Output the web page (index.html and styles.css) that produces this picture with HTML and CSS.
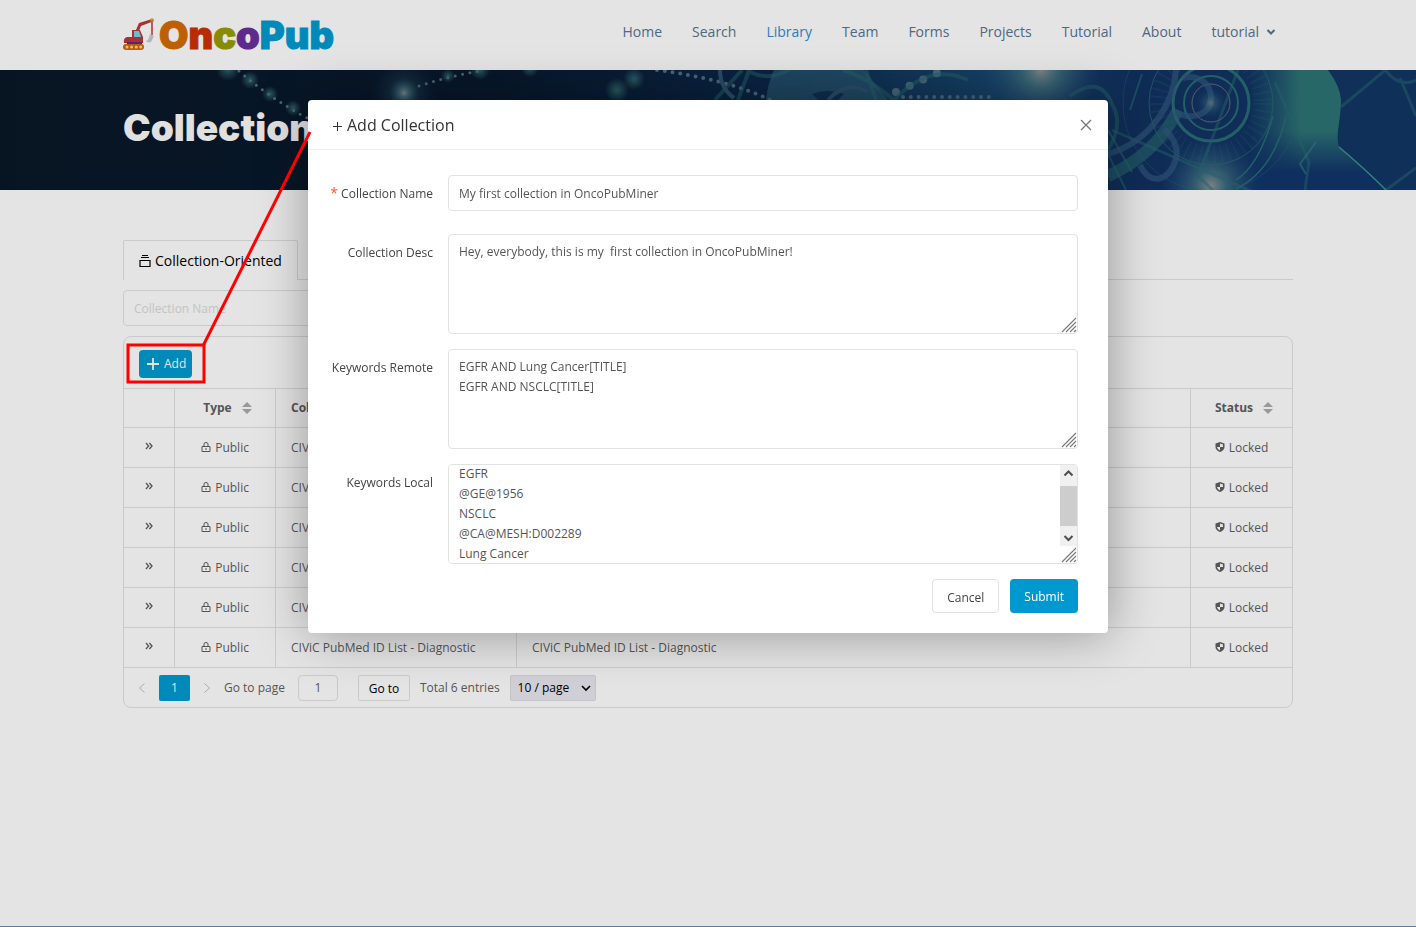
FILE: index.html
```
<!DOCTYPE html>
<html lang="en">
<head>
<meta charset="utf-8">
<meta name="viewport" content="width=device-width, initial-scale=1">
<title>OncoPub - Collections</title>
<link rel="stylesheet" href="styles.css">
</head>
<body>
<svg class="sprite" aria-hidden="true">
  <symbol id="i-lock" viewBox="0 0 10 12"><path d="M1 5.500h8v5H1zM3 5.500V3q0-1.500 2-1.500T7 3v2.500M4 8h2" fill="none" stroke="currentColor" stroke-width="1"/></symbol>
  <symbol id="i-shield" viewBox="0 0 10 12"><path d="M5 1 9.500 2.500V6c0 2.500-2 4-4.500 5C2.500 10 .5 8.500.5 6V2.500z" fill="currentColor"/><path d="M5 2.500 8 3.500V6H5zM5 6v3.500C3.300 8.700 2.200 7.600 2 6z" fill="#e4e4e4"/></symbol>
  <symbol id="i-more" viewBox="0 0 8 8"><path d="M1 1l2.600 3L1 7M4.400 1L7 4 4.400 7" fill="none" stroke="currentColor" stroke-width="1.300"/></symbol>
  <symbol id="i-sort" viewBox="0 0 10 12"><path d="M5 0l5 5H0zM5 12l5-5H0z" fill="#999"/></symbol>
  <symbol id="i-grip" viewBox="0 0 16 16"><path d="M1 15 15 1M5 15 15 5M9 15l6-6M13 15l2-2" fill="none" stroke="#777" stroke-width="1.100"/></symbol>
</svg>

<header class="site-header">
  <div class="container header-row">
    <a class="logo" href="#">
      <svg class="digger" viewBox="0 0 32 32" aria-hidden="true">
        <path d="M13 12 16 5l13-4 2 2-13 5-3 7z" fill="#a93230"/>
        <path d="M29 3v14" stroke="#a93230" stroke-width="1.500"/>
        <circle cx="29" cy="2" r="1.800" fill="#c08a2a"/>
        <path d="M27 16l4 2-3 6c-2 1-4 0-5-1 3-1 3-4 4-7z" fill="#b4b7b9"/>
        <path d="M9 12h8l3 7v6H1q-1-5 3-6h5z" fill="#a93230"/>
        <path d="M11 13h5l2 6h-7z" fill="#6bbbd2"/>
        <path d="M4 24h15v3H4z" fill="#57237b"/>
        <rect y="26" width="21" height="6" rx="3" fill="#b75b16"/>
        <path d="M4 29h14" stroke="#e9c64a" stroke-width="3" stroke-linecap="round" stroke-dasharray="0 4.600"/>
      </svg>
      <span class="logo-text"><span class="c-o">O</span><span class="c-n">n</span><span class="c-c">c</span><span class="c-p">o</span><span class="c-b">Pub</span></span>
    </a>
    <nav class="nav">
      <a href="#">Home</a><a href="#">Search</a><a href="#" class="active">Library</a><a href="#">Team</a><a href="#">Forms</a><a href="#">Projects</a><a href="#">Tutorial</a><a href="#">About</a>
      <a href="#" class="account">tutorial <svg width="10" height="8" viewBox="0 0 10 8" aria-hidden="true"><path d="M1.500 2 5 5.500 8.500 2" fill="none" stroke="currentColor" stroke-width="2"/></svg></a>
    </nav>
  </div>
</header>

<section class="hero">
  <svg class="hero-art" viewBox="0 0 1416 120" preserveAspectRatio="xMaxYMid slice" aria-hidden="true">
    <defs>
      <radialGradient id="glow"><stop offset="0" stop-color="#7c8385"/><stop offset=".3" stop-color="#45737a" stop-opacity=".7"/><stop offset="1" stop-color="#1c4577" stop-opacity="0"/></radialGradient>
      <radialGradient id="spot"><stop offset="0" stop-color="#2d6064" stop-opacity=".9"/><stop offset="1" stop-color="#2d6064" stop-opacity="0"/></radialGradient>
      <linearGradient id="head" gradientUnits="userSpaceOnUse" x1="1250" y1="0" x2="1341" y2="0"><stop offset="0" stop-color="#245c6c" stop-opacity="0"/><stop offset=".55" stop-color="#286768"/><stop offset="1" stop-color="#286768"/></linearGradient>
      <linearGradient id="deep" gradientUnits="userSpaceOnUse" x1="0" y1="0" x2="0" y2="120"><stop offset=".5" stop-color="#0f2f5e" stop-opacity="0"/><stop offset=".85" stop-color="#0f2f5e"/></linearGradient>
      <linearGradient id="sea"><stop offset="0" stop-color="#071523"/><stop offset=".35" stop-color="#071729"/><stop offset=".55" stop-color="#0a2342"/><stop offset=".7" stop-color="#153f63"/><stop offset=".8" stop-color="#0f2c56"/><stop offset="1" stop-color="#0f3159"/></linearGradient>
    </defs>
    <rect width="1416" height="120" fill="url(#sea)"/>
    <path d="M766 30Q768 12 774 0h90l24 30z" fill="#245068" opacity=".75"/>
    <path d="M812 24q15-6 32 0l-6 6h-20z" fill="#0f2c4e"/>
    <g fill="url(#spot)"><circle cx="228" cy="-1" r="12"/><circle cx="250" cy="10" r="9"/><circle cx="270" cy="24" r="8"/><circle cx="293" cy="38" r="8"/><circle cx="448" cy="6" r="7"/><circle cx="480" cy="0" r="10"/><circle cx="530" cy="-2" r="9"/><circle cx="617" cy="20" r="12"/><circle cx="634" cy="9" r="11"/></g>
    <circle cx="404" cy="23" r="34" fill="url(#glow)" opacity=".35"/><circle cx="404" cy="23" r="15" fill="url(#glow)"/>
    <g fill="none" stroke="#466479" stroke-linecap="round">
      <path d="M239 1Q272 30 311 50M419 16Q450 6 480 1" stroke-width="3" stroke-dasharray="0 7.500"/>
      <path d="M657 0Q730 10 770 30M903 27h90" stroke-width="4" stroke-dasharray="0 7.800"/>
      <path d="M896 22 948-2" stroke-width="8" stroke-dasharray="0 15"/>
    </g>
    <circle cx="1041" cy="0" r="60" fill="url(#glow)"/>
    <path d="M1250 0h78q12 16 13 30c0 20-6 36-2 47q30 26 47 43h-136z" fill="url(#head)"/>
    <path d="M1250 0h78q12 16 13 30c0 20-6 36-2 47q30 26 47 43h-136z" fill="url(#deep)"/>
    <circle cx="1211" cy="116" r="50" fill="url(#glow)"/>
    <g fill="none" stroke="#246067">
      <circle cx="1211" cy="33" r="38" stroke-width="3"/><circle cx="1211" cy="33" r="27" stroke-width="2"/><circle cx="1211" cy="33" r="62" opacity=".8"/><circle cx="1211" cy="33" r="88" opacity=".4"/>
      <circle cx="1211" cy="33" r="19" stroke="#56616d"/>
      <path d="M1273 46q-14 50-37 64M1286 46q-12 54-50 73" stroke-width="1.500"/>
      <circle cx="1211" cy="33" r="52" stroke-width="18" stroke-dasharray="2 5" opacity=".2"/>
      <path d="M1112 60l200 88M1213 120l-15-14 40-106M1275 12l34 80-4 28M1341 37l48-40M1386 120l30-22M1380-8q16 28 36 18M1400 8l16 38" stroke-width="3" opacity=".5"/>
      <path d="M843 0q30 10 55 34M715 30 742 0M738 30l12-32M750 2q20 10 42-4M894 30Q930-8 968 10M1070 26Q1100 4 1112 34q12 20-4 46M866 0l10 30" stroke-width="4" opacity=".5"/>
      <path d="M1108 106q48-22 70-66" stroke-width="12" opacity=".6"/>
      <path d="M1108 60l24 42M1126 120l-18-36M1142 4l-12 36" stroke-width="2" opacity=".6"/>
      <path d="M720 0q0 18 14 28M828 30q18-20 40-8" stroke-width="4" stroke="#284a66"/>
      <path d="M1108 84c46-14 66-54 68-84M1140 95c10 22 30 16 36-6q4-16-12-30M1175 42c20 10 36 0 36-14s-12-24-28-20" stroke="#2c4e72" stroke-width="6" opacity=".7"/>
      <path d="M1339 77q26 22 47 43" stroke="#37817f" stroke-width="1.500"/>
      <path d="M1316 72l-16 22 6 10" stroke="#337a76" stroke-width="2" opacity=".5"/>
    </g>
    <circle cx="1211" cy="33" r="15" fill="url(#glow)" opacity=".6"/>
  </svg>
  <div class="container"><h1>Collections</h1></div>
</section>

<main class="container main">
  <div class="tabs"><a class="tab" href="#"><svg width="12" height="12" viewBox="0 0 12 12" aria-hidden="true"><path d="M3 .5h6M2 2.500h8M1 5.500h10v6H1z" fill="none" stroke="currentColor" stroke-width="1.200"/></svg>Collection-Oriented</a></div>
  <input class="filter" type="text" placeholder="Collection Name" aria-label="Filter by collection name">
  <div class="grid-box">
    <div class="toolbar"><button class="add" type="button"><svg width="12" height="12" viewBox="0 0 12 12" aria-hidden="true"><path d="M0 6h12M6 0v12" stroke="currentColor" stroke-width="1.800"/></svg>Add</button></div>
    <table>
      <colgroup><col class="w-more"><col class="w-type"><col class="w-name"><col><col class="w-type"></colgroup>
      <thead><tr><th></th><th class="mid">Type <svg class="sort"><use href="#i-sort"/></svg></th><th>Collection Name</th><th>Collection Desc</th><th class="mid">Status <svg class="sort"><use href="#i-sort"/></svg></th></tr></thead>
      <tbody>
        <tr><td class="mid"><svg class="more"><use href="#i-more"/></svg></td><td class="mid"><svg class="ico"><use href="#i-lock"/></svg> Public</td><td>CIViC</td><td></td><td class="mid"><svg class="ico"><use href="#i-shield"/></svg> Locked</td></tr>
        <tr><td class="mid"><svg class="more"><use href="#i-more"/></svg></td><td class="mid"><svg class="ico"><use href="#i-lock"/></svg> Public</td><td>CIViC</td><td></td><td class="mid"><svg class="ico"><use href="#i-shield"/></svg> Locked</td></tr>
        <tr><td class="mid"><svg class="more"><use href="#i-more"/></svg></td><td class="mid"><svg class="ico"><use href="#i-lock"/></svg> Public</td><td>CIViC</td><td></td><td class="mid"><svg class="ico"><use href="#i-shield"/></svg> Locked</td></tr>
        <tr><td class="mid"><svg class="more"><use href="#i-more"/></svg></td><td class="mid"><svg class="ico"><use href="#i-lock"/></svg> Public</td><td>CIViC</td><td></td><td class="mid"><svg class="ico"><use href="#i-shield"/></svg> Locked</td></tr>
        <tr><td class="mid"><svg class="more"><use href="#i-more"/></svg></td><td class="mid"><svg class="ico"><use href="#i-lock"/></svg> Public</td><td>CIViC</td><td></td><td class="mid"><svg class="ico"><use href="#i-shield"/></svg> Locked</td></tr>
        <tr><td class="mid"><svg class="more"><use href="#i-more"/></svg></td><td class="mid"><svg class="ico"><use href="#i-lock"/></svg> Public</td><td>CIViC PubMed ID List - Diagnostic</td><td>CIViC PubMed ID List - Diagnostic</td><td class="mid"><svg class="ico"><use href="#i-shield"/></svg> Locked</td></tr>
      </tbody>
    </table>
    <div class="pager">
      <button class="arrow" type="button" aria-label="Previous page"><svg width="8" height="10" viewBox="0 0 8 10"><path d="M6.500.5 1.500 5l5 4.500" fill="none" stroke="currentColor"/></svg></button>
      <button class="current" type="button">1</button>
      <button class="arrow" type="button" aria-label="Next page"><svg width="8" height="10" viewBox="0 0 8 10"><path d="M1.500.5 6.500 5l-5 4.500" fill="none" stroke="currentColor"/></svg></button>
      <label for="page">Go to page</label><input id="page" class="page-no" type="text" value="1">
      <button class="go" type="button">Go to</button>
      <span>Total 6 entries</span>
      <span class="select-wrap"><select aria-label="Entries per page"><option>10 / page</option></select><svg class="caret" width="10" height="8" viewBox="0 0 10 8" aria-hidden="true"><path d="M1 2l4 4 4-4" fill="none" stroke="#000" stroke-width="1.600"/></svg></span>
    </div>
  </div>
  <svg class="callout" viewBox="0 0 200 260" aria-hidden="true"><g fill="none" stroke="#f00" stroke-width="3"><rect x="5" y="215" width="76" height="37"/><path d="M80 216 187 2"/></g></svg>
</main>
<footer class="footer"></footer>

<div class="overlay">
  <form class="modal" role="dialog" aria-labelledby="dlg-title">
    <div class="modal-head">
      <h2 id="dlg-title"><svg width="10" height="12" viewBox="0 0 10 12" aria-hidden="true"><path d="M1 7.500h9M5.500 3v9" stroke="currentColor"/></svg>Add Collection</h2>
      <button class="close" type="button" aria-label="Close"><svg width="12" height="12" viewBox="0 0 12 12"><path d="M1 1l10 10M11 1 1 11" stroke="#777" stroke-width="1.300"/></svg></button>
    </div>
    <div class="modal-body">
      <div class="row first"><label for="name"><span class="req">*</span> Collection Name</label><div class="field"><input id="name" type="text" value="My first collection in OncoPubMiner"></div></div>
      <div class="row"><label for="desc">Collection Desc</label><div class="field"><textarea id="desc">Hey, everybody, this is my  first collection in OncoPubMiner!</textarea><svg class="grip"><use href="#i-grip"/></svg></div></div>
      <div class="row"><label for="remote">Keywords Remote</label><div class="field"><textarea id="remote">EGFR AND Lung Cancer[TITLE]
EGFR AND NSCLC[TITLE]</textarea><svg class="grip"><use href="#i-grip"/></svg></div></div>
      <div class="row"><label for="local">Keywords Local</label><div class="field"><textarea id="local">EGFR
@GE@1956
NSCLC
@CA@MESH:D002289
Lung Cancer</textarea>
        <div class="bar" aria-hidden="true"><svg viewBox="0 0 17 20"><path d="M4.500 10 8.500 6l4 4" fill="none" stroke="#505050" stroke-width="2"/></svg><i></i><svg viewBox="0 0 17 20"><path d="M4.500 10l4 4 4-4" fill="none" stroke="#505050" stroke-width="2"/></svg></div>
        <svg class="grip"><use href="#i-grip"/></svg></div></div>
      <div class="actions"><button class="cancel" type="button">Cancel</button><button class="submit" type="submit">Submit</button></div>
    </div>
  </form>
</div>
<script src="script.js"></script>
</body>
</html>
```
FILE: script.js
```
document.getElementById("local").scrollTop = 8;
```
FILE: styles.css
```
* { box-sizing: border-box; }
body { margin: 0; min-height: 100vh; display: flex; flex-direction: column; background: #e4e4e4; color: #555; font: 12px/20px "Open Sans", "Noto Sans", sans-serif; }
a { color: inherit; text-decoration: none; }
button, input, select, textarea { font: inherit; color: inherit; margin: 0; }
svg { flex: none; }
.sprite { position: absolute; width: 0; height: 0; }
.container { width: 100%; max-width: 1170px; margin: 0 auto; }

.header-row { height: 70px; display: flex; justify-content: space-between; }
.logo { display: flex; gap: 4px; padding-top: 18px; }
.digger { width: 32px; height: 32px; }
.logo-text { font-family: Inter, "Open Sans", sans-serif; font-size: 38px; font-weight: 900; line-height: 34px; -webkit-text-stroke: 1px; }
.c-o { color: #bd6003; }
.c-n { color: #b82c03; }
.c-c { color: #878c02; }
.c-p { color: #5d2b8b; }
.c-b { color: #008aba; }
.nav { display: flex; gap: 30px; padding: 22px 17px 0 0; font-size: 14px; color: #4d687f; }
.nav a { height: 20px; }
.nav .active { color: #2f79b9; }
.account { display: flex; align-items: center; gap: 7px; }

.hero { position: relative; height: 120px; background: #071729; overflow: hidden; }
.hero-art { position: absolute; inset: 0; width: 100%; height: 100%; }
.hero .container { position: relative; }
h1 { margin: 0; padding-top: 34px; font-family: Inter, "Open Sans", sans-serif; font-size: 37px; line-height: 48px; font-weight: 900; color: #e0e0e0; }

.main { position: relative; padding-top: 50px; }
.tabs { display: flex; height: 40px; border-bottom: 1px solid #cacaca; }
.tab { height: 40px; display: flex; align-items: center; gap: 4px; padding: 0 15px; border: 1px solid #cacaca; border-bottom: 0; border-radius: 2px 2px 0 0; background: #e4e4e4; color: #000; font-size: 14px; }
.filter { display: block; width: 240px; height: 36px; margin: 10px 0; padding: 0 10px; background: none; border: 1px solid #cacaca; border-radius: 4px; outline: 0; }
.filter::placeholder { color: #c3c3c3; }
.grid-box { border: 1px solid #cacaca; border-radius: 8px; }
.toolbar { height: 52px; padding: 13px 15px; border-bottom: 1px solid #cacaca; }
.add { display: flex; align-items: center; gap: 5px; height: 28px; padding: 0 6px 0 8px; border: 0; border-radius: 4px; background: #008aba; color: #e4e4e4; }
table { width: 100%; table-layout: fixed; border-collapse: separate; border-spacing: 0; }
.w-more { width: 51px; }
.w-type { width: 101px; }
.w-name { width: 241px; }
th, td { height: 40px; padding: 0 15px; border-right: 1px solid #cacaca; border-bottom: 1px solid #cacaca; text-align: left; white-space: nowrap; overflow: hidden; }
th { height: 39px; font-weight: 700; }
th:last-child, td:last-child { border-right: 0; }
th.mid, td.mid { text-align: center; padding: 0 4px; }
th.mid { padding-left: 9px; }
.sort { width: 10px; height: 12px; margin-left: 7px; vertical-align: -2px; }
.ico { width: 10px; height: 12px; vertical-align: -1px; margin-right: 1px; }
.more { width: 8px; height: 8px; vertical-align: 2px; }
.pager { height: 39px; display: flex; align-items: center; padding: 0 14px; }
.pager button { height: 26px; }
.arrow { width: 8px; padding: 0; border: 0; background: none; color: #aaa; display: flex; align-items: center; }
.current { width: 31px; margin: 0 13px; padding: 0; border: 0; border-radius: 2px; background: #008aba; color: #e4e4e4; }
.pager label { margin: 0 13px; }
.page-no { width: 40px; height: 26px; padding: 0; margin-right: 20px; text-align: center; background: none; border: 1px solid #cacaca; border-radius: 4px; }
.go { width: 52px; margin-right: 10px; padding: 2px 0 0; background: none; border: 1px solid #cacaca; border-radius: 2px; color: #000; }
.select-wrap { position: relative; margin-left: 10px; }
.select-wrap select { display: block; appearance: none; width: 86px; height: 26px; padding: 0 7px; background: #d0cfd5; border: 1px solid #c4c4c8; border-radius: 2px; color: #000; }
.caret { position: absolute; right: 5px; top: 9px; }
.callout { position: absolute; left: 0; top: -60px; width: 200px; height: 260px; z-index: 20; pointer-events: none; }
.footer { margin-top: auto; height: 1px; background: #617c9e; }

.overlay { position: fixed; inset: 0; z-index: 10; display: flex; justify-content: center; align-items: flex-start; padding-top: 100px; }
.modal { width: 800px; background: #fff; border-radius: 4px; box-shadow: 1px 1px 50px rgba(0, 0, 0, .35); }
.modal-head { height: 50px; display: flex; justify-content: space-between; align-items: center; padding: 0 16px 0 24px; border-bottom: 1px solid #eee; }
h2 { display: flex; align-items: center; gap: 5px; margin: 0; font-size: 16px; line-height: 24px; font-weight: 400; color: #333; }
.close { display: flex; padding: 0; border: 0; background: none; }
.modal-body { padding: 25px 30px 20px 15px; color: #444; }
.row { display: flex; margin-bottom: 15px; }
.row.first { margin-bottom: 23px; }
.row label { width: 125px; padding: 9px 15px 0 0; text-align: right; white-space: nowrap; flex: none; }
.req { color: #ff5722; font-size: 14px; line-height: 1; }
.field { position: relative; flex: 1; color: #555; }
.field input, .field textarea { display: block; width: 100%; height: 36px; padding: 0 10px; border: 1px solid #e2e2e2; border-radius: 4px; background: #fff; outline: 0; }
.field textarea { height: 100px; padding: 7px 10px; line-height: 20px; resize: none; scrollbar-width: none; }
.grip { position: absolute; right: 1px; bottom: 1px; width: 16px; height: 16px; }
.bar { position: absolute; right: 1px; top: 1px; width: 17px; background: #f0f0f0; display: flex; flex-direction: column; }
.bar svg { width: 17px; height: 20px; }
.bar svg:first-child { height: 21px; }
.bar i { height: 40px; background: #cdcdcd; }
.actions { display: flex; justify-content: flex-end; gap: 11px; }
.actions button { height: 34px; padding: 2px 14px 0; border-radius: 4px; }
.actions .cancel { padding-top: 3px; background: #fff; border: 1px solid #e2e2e2; }
.submit { background: #0099cf; border: 0; color: #fff; }
```
